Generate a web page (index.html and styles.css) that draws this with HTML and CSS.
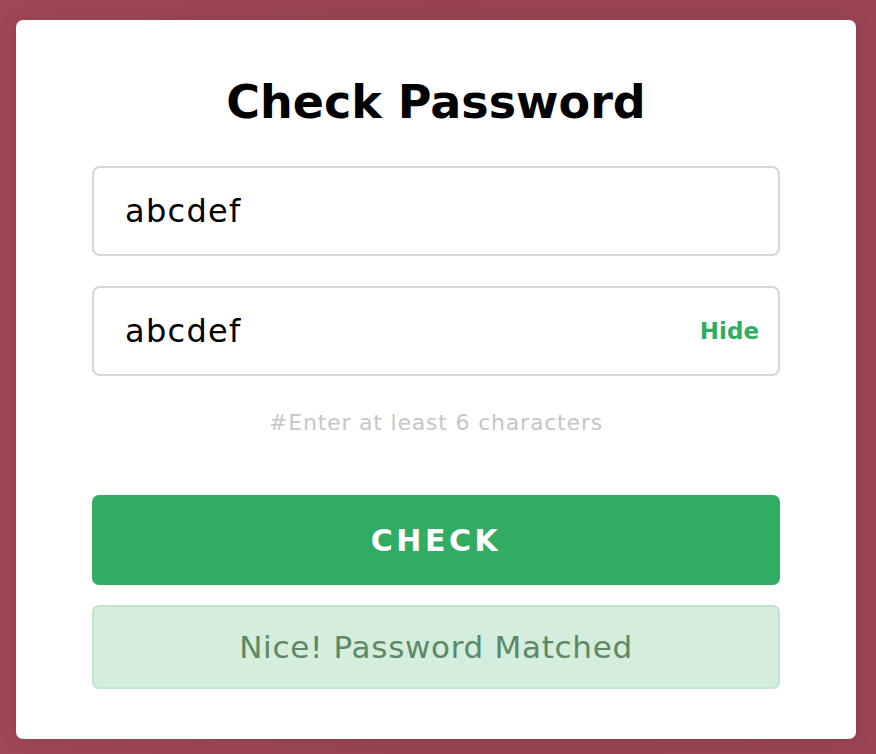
FILE: index.html
```html
<!DOCTYPE html>
<html>
<head>
<meta charset="utf-8">
<link rel="stylesheet" href="styles.css">
</head>
<body>
<div class="card">
  <h1 class="title">Check Password</h1>
  <div class="field"><span class="value">abcdef</span></div>
  <div class="field"><span class="value">abcdef</span><span class="toggle">Hide</span></div>
  <p class="hint">#Enter at least 6 characters</p>
  <button class="check">CHECK</button>
  <div class="alert">Nice! Password Matched</div>
</div>
</body>
</html>
```
FILE: styles.css
```css
html, body {
  margin: 0;
  height: 100%;
}
body {
  background: linear-gradient(90deg, #9f4757 0%, #98434f 50%, #9a4453 100%);
  font-family: "DejaVu Sans", sans-serif;
  padding: 20px 20px 15px 16px;
  box-sizing: border-box;
}
.card {
  width: 840px;
  height: 719px;
  box-sizing: border-box;
  background: #fff;
  border-radius: 7px;
  padding: 48px 76px 0 76px;
  display: flex;
  flex-direction: column;
  box-shadow: 0 0 20px rgba(0,0,0,0.08);
}
.title {
  margin: 0 0 29px;
  text-align: center;
  font-size: 46px;
  font-weight: 700;
  line-height: 69px;
  color: #000;
}
.field {
  height: 90px;
  box-sizing: border-box;
  border: 2px solid #d6d6d6;
  border-radius: 8px;
  display: flex;
  align-items: center;
  justify-content: space-between;
  padding: 0 19px 0 31px;
  margin-bottom: 30px;
}
.value {
  font-size: 32px;
  letter-spacing: 1.3px;
  color: #000;
}
.toggle {
  font-size: 23px;
  font-weight: 700;
  color: #32ac62;
}
.hint {
  margin: 2px 0 57px;
  text-align: center;
  font-size: 22px;
  letter-spacing: 0.8px;
  line-height: 30px;
  color: #c6c6c6;
}
.check {
  height: 90px;
  border: none;
  border-radius: 7px;
  background: #32ac62;
  color: #fff;
  font-family: "DejaVu Sans", sans-serif;
  font-size: 30px;
  font-weight: 700;
  letter-spacing: 3.5px;
  margin: 0 0 20px;
}
.alert {
  height: 84px;
  box-sizing: border-box;
  border: 2px solid #c3e6cb;
  border-radius: 7px;
  background: #d5eddc;
  color: #5b8965;
  font-size: 31px;
  letter-spacing: 0.7px;
  display: flex;
  align-items: center;
  justify-content: center;
}
```
